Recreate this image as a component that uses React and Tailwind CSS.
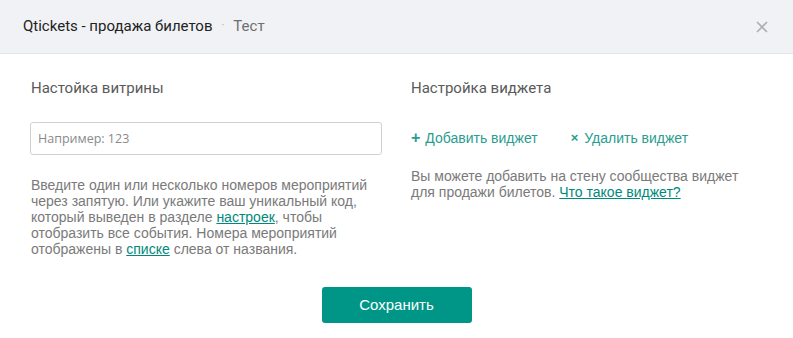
import React from 'react';

const CloseIcon = () => (
    <svg width="12" height="12" viewBox="0 0 12 12" className="text-[#aab0b8]">
        <path d="M1 1L11 11M11 1L1 11" stroke="currentColor" strokeWidth="1.6" />
    </svg>
);

const App = () => {
    return (
        <div className="w-[793px] h-[338px] bg-white overflow-hidden font-['Liberation_Sans',Arial,sans-serif]">
            {/* Header */}
            <div className="h-[54px] bg-[#f0f2f5] border-b border-[#e2e5e9] flex items-center pl-[23px] pr-[25px]">
                <span className="font-['Roboto',sans-serif] text-[15px] text-[#222]">Qtickets - продажа билетов</span>
                <span className="mx-[9px] text-[#aaa] text-[11px] font-['Roboto',sans-serif]">·</span>
                <span className="font-['Roboto',sans-serif] text-[15px] text-[#6f6f6f]">Тест</span>
                <button className="ml-auto flex items-center justify-center">
                    <CloseIcon />
                </button>
            </div>

            {/* Body */}
            <div className="flex pt-[24px]">
                <div className="w-[352px] ml-[30px]">
                    <h2 className="font-['Roboto',sans-serif] text-[15px] text-[#5a5a5a] pl-px leading-[20px]">Настойка витрины</h2>
                    <input
                        className="mt-[24px] w-[352px] h-[33px] border border-[#cfd1d4] rounded-[3px] px-[7px] text-[12.5px] font-['Open_Sans',sans-serif] placeholder:text-[#8a8a8a] outline-none"
                        placeholder="Например: 123"
                    />
                    <p className="mt-[22px] pl-px text-[14px] leading-[16px] text-[#7a7a7a]">
                        Введите один или несколько номеров мероприятий через запятую. Или укажите ваш уникальный код, который выведен в разделе{' '}
                        <a className="text-[#00897b] underline">настроек</a>, чтобы отобразить все события. Номера мероприятий отображены в{' '}
                        <a className="text-[#00897b] underline">списке</a> слева от названия.
                    </p>
                </div>
                <div className="w-[350px] ml-[29px]">
                    <h2 className="font-['Roboto',sans-serif] text-[15px] text-[#5a5a5a] leading-[20px]">Настройка виджета</h2>
                    <div className="mt-[31px] flex items-center text-[14px] text-[#2a9d8f] leading-[18px]">
                        <span className="flex items-center">
                            <span className="text-[16px] font-bold mr-[5px]">+</span>Добавить виджет
                        </span>
                        <span className="flex items-center ml-[33px]">
                            <span className="text-[13px] font-bold mr-[6px]">×</span>Удалить виджет
                        </span>
                    </div>
                    <p className="mt-[21px] text-[14px] leading-[16px] text-[#7a7a7a]">
                        Вы можете добавить на стену сообщества виджет для продажи билетов.{' '}
                        <a className="text-[#00897b] underline">Что такое виджет?</a>
                    </p>
                </div>
            </div>

            <div className="flex justify-center mt-[30px]">
                <button className="w-[150px] h-[36px] rounded-[3px] bg-[#009687] text-white text-[15px]">Сохранить</button>
            </div>
        </div>
    );
};

export default App;
